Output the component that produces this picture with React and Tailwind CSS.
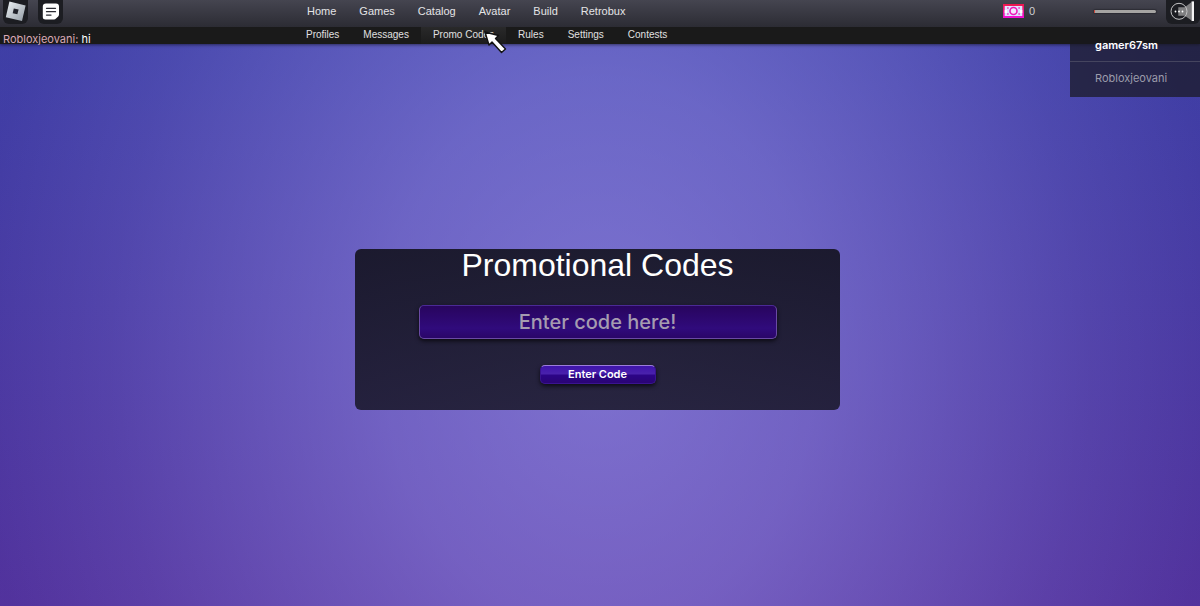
import React, { useState } from 'react';

const mainLinks = ['Home', 'Games', 'Catalog', 'Avatar', 'Build', 'Retrobux'];
const subLinks = ['Profiles', 'Messages', 'Promo Codes', 'Rules', 'Settings', 'Contests'];

function RobloxLogo() {
  return (
    <svg viewBox="0 0 25 24" className="w-[25px] h-6">
      <defs>
        <linearGradient id="logoFill" x1="0" y1="0" x2="1" y2="1">
          <stop offset="0" stopColor="#eef3f6" />
          <stop offset="1" stopColor="#929ba4" />
        </linearGradient>
      </defs>
      <path d="M6.4 1.6 L22.6 5.4 L19 21 L2.8 17.2 Z" fill="url(#logoFill)" />
      <path d="M10.8 8.4 L15.6 9.5 L14.4 14.3 L9.7 13.2 Z" fill="#20222a" />
    </svg>
  );
}

function ChatIcon() {
  return (
    <svg viewBox="0 0 25 24" className="w-[25px] h-6">
      <path
        d="M8 3.5 H18 Q21 3.5 21 6.5 V14.5 Q21 15.5 20.2 16.4 L18 18.6 Q17.2 19.5 16 19.5 H7.5 Q4.8 19.5 4.8 17 V6.5 Q4.8 3.5 8 3.5 Z"
        fill="#fff"
      />
      <path d="M8.5 8.3 H17.5 M8.5 11.7 H17.5 M8.5 15.1 H13" stroke="#2a2b32" strokeWidth="1.3" strokeLinecap="round" />
    </svg>
  );
}

function CashIcon() {
  return (
    <svg viewBox="0 0 21 14" className="w-[21px] h-[14px]">
      <defs>
        <linearGradient id="cashEdge" x1="0" y1="0" x2="0" y2="1">
          <stop offset="0" stopColor="#ee1848" />
          <stop offset="1" stopColor="#f010d8" />
        </linearGradient>
      </defs>
      <rect width="21" height="14" fill="url(#cashEdge)" />
      <rect x="1.7" y="2" width="17.6" height="10" fill="#dfe4ff" />
      <path d="M1.7 6 H4 V9 H1.7 Z M17 6 H19.3 V9 H17 Z" fill="#fff" />
      <path d="M4.2 3 H5.6 V5 H4.2 Z M15.4 3 H16.8 V5 H15.4 Z M4.2 9 H5.6 V11 H4.2 Z M15.4 9 H16.8 V11 H15.4 Z" fill="#f04cc8" />
      <circle cx="10.5" cy="7" r="3.5" fill="#f6e4ff" stroke="#ee18b8" strokeWidth="1.6" />
    </svg>
  );
}

function SpeakerIcon() {
  return (
    <svg viewBox="0 0 34 24" className="w-[34px] h-6">
      <path d="M12.3 7.3 H18.8 L25.6 2 V20.6 L18.8 15.8 H12.3 Z" fill="#808082" />
      <rect x="25.6" y="1.4" width="2.4" height="19.6" fill="#f4f4f4" />
      <circle cx="13" cy="11.3" r="8" fill="none" stroke="#c4c4c6" strokeWidth="1" />
      <circle cx="9.5" cy="11.5" r="0.9" fill="#fff" />
      <circle cx="13" cy="11.5" r="0.9" fill="#fff" />
      <circle cx="16.5" cy="11.5" r="0.9" fill="#fff" />
    </svg>
  );
}

function Pointer() {
  return (
    <svg viewBox="0 0 24 24" className="pointer-events-none absolute left-[63px] top-1 z-20 size-6">
      <path
        d="M1 1 L14.5 4.5 L11.5 7.5 L21.5 18 L17.5 21.5 L8 11 L5 14 Z"
        fill="#fff"
        stroke="#111"
        strokeWidth="1.4"
        strokeLinejoin="round"
      />
    </svg>
  );
}

export default function App() {
  const [code, setCode] = useState('');
  const [volume, setVolume] = useState(0);

  return (
    <div className="relative flex min-h-screen flex-col overflow-hidden bg-[radial-gradient(ellipse_52%_130%_at_50%_58%,rgba(178,172,255,0.5),rgba(178,172,255,0.38)_35%,rgba(178,172,255,0.12)_78%,rgba(178,172,255,0.02)),linear-gradient(#3b3ea5,#50309b)] font-[Inter,sans-serif] text-white">
      <header className="relative z-10 shadow-[0_1px_3px_rgba(0,0,0,0.5)]">
        {/* Main bar */}
        <div className="flex h-[27px] items-start bg-linear-to-b from-[#454550] to-[#2c2c34]">
          <div className="flex w-[24.5%] gap-[10px] pl-[3px]">
            <button type="button" aria-label="Menu" className="rounded-b-md bg-[#1c1d22]">
              <RobloxLogo />
            </button>
            <button type="button" aria-label="Chat" className="rounded-b-md bg-[#1c1d22]">
              <ChatIcon />
            </button>
          </div>
          <nav className="flex h-[22px] items-center gap-[23px] pl-[13px] font-['Liberation_Sans',sans-serif] text-[11px] text-[#e4e4e6]">
            {mainLinks.map((label) => (
              <a key={label} href="#">{label}</a>
            ))}
          </nav>
          <div className="ml-auto flex items-start">
            <div className="mr-[59px] flex h-[22px] items-center gap-[5px] font-['Liberation_Sans',sans-serif] text-[11px] text-[#cfcfd2]">
              <CashIcon />
              <span>0</span>
            </div>
            <div className="mr-[10px] flex h-[22px] items-center">
              <input
                type="range"
                aria-label="Volume"
                min="0"
                max="100"
                value={volume}
                onChange={(e) => setVolume(Number(e.target.value))}
                className="h-[3px] w-[62px] appearance-none rounded-sm bg-[#a5a4a2] shadow-[0_0_1px_1px_rgba(30,30,35,0.5)] [&::-webkit-slider-thumb]:h-[3px] [&::-webkit-slider-thumb]:w-px [&::-webkit-slider-thumb]:appearance-none [&::-webkit-slider-thumb]:bg-[#c8483c]"
              />
            </div>
            <button type="button" aria-label="Sound" className="rounded-b-md bg-[#1c1d22]">
              <SpeakerIcon />
            </button>
          </div>
        </div>

        {/* Sub bar */}
        <div className="flex h-[17px] bg-[#1a1a1a]">
          <p className="w-[24.5%] pl-[3px] pt-1 text-[11px] leading-4">
            <span className="text-[#d9a9b4]">Robloxjeovani:</span> hi
          </p>
          <nav className="flex font-['Liberation_Sans',sans-serif] text-[10px] leading-4 text-[#e0e0e0]">
            {subLinks.map((label) => (
              <a
                key={label}
                href="#"
                className={label === 'Promo Codes' ? 'relative bg-linear-to-b from-[#29292a] to-[#1c1c1c] px-3' : 'px-3'}
              >
                {label}
                {label === 'Promo Codes' && <Pointer />}
              </a>
            ))}
          </nav>
        </div>
      </header>

      {/* Player list */}
      <ul className="absolute right-0 top-[27px] z-10 w-[130px] bg-[rgba(24,24,30,0.7)] text-[11px]">
        <li className="border-b border-[#45455f] pl-[25px] pt-[10px] pb-2 leading-4 font-semibold">gamer67sm</li>
        <li className="pl-[25px] pt-2 pb-[11px] leading-4 text-[#9c9cab]">Robloxjeovani</li>
      </ul>

      <main className="flex flex-1 items-center justify-center pt-2 pr-[5px]">
        <form
          onSubmit={(e) => e.preventDefault()}
          className="flex w-full max-w-[485px] flex-col items-center rounded-md bg-linear-to-b from-[rgba(12,12,18,0.84)] to-[rgba(14,14,22,0.77)] pb-[26px]"
        >
          <h1 className="font-['Liberation_Sans',sans-serif] text-[32px] leading-8">Promotional Codes</h1>
          <input
            type="text"
            aria-label="Promotional code"
            placeholder="Enter code here!"
            value={code}
            onChange={(e) => setCode(e.target.value)}
            className="mt-6 h-[34px] w-[358px] rounded-[5px] border border-[#6a4aa4] border-t-[#4b2a96] bg-linear-to-b from-[#28055e] via-[#300b7c] via-70% to-[#2a0668] text-center text-[20px] font-medium text-white shadow-[0_2px_4px_rgba(0,0,0,0.7)] placeholder:text-[#a59cb0]"
          />
          <button
            type="submit"
            className="mt-[26px] h-[19px] w-[116px] rounded-[5px] border border-[#3a1390] border-t-[#9c7cdc] bg-[linear-gradient(#3f14ac,#4a22ac_48%,#2c0488_52%,#2a0474)] text-[11px] leading-4 font-semibold shadow-[0_2px_4px_rgba(0,0,0,0.7)]"
          >
            Enter Code
          </button>
        </form>
      </main>
    </div>
  );
}
